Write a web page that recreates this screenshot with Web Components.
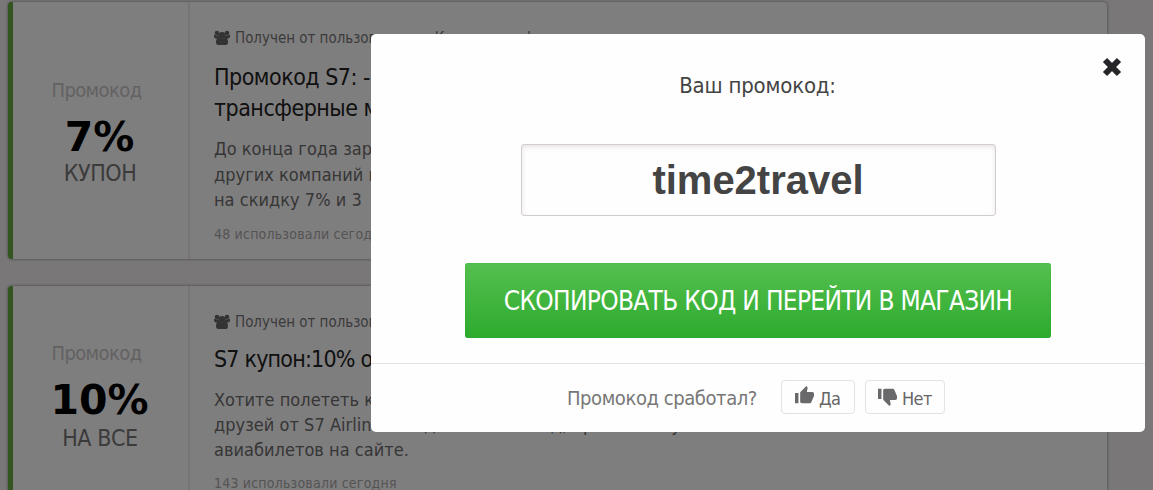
<!DOCTYPE html>
<html lang="ru">
<head>
    <meta charset="UTF-8">
    <meta name="viewport" content="width=device-width, initial-scale=1.0">
    <title>Промокоды S7</title>
    <style>
        body {
            margin: 0;
            height: 490px;
            overflow: hidden;
            background: #f3eff1;
            font-family: "DejaVu Sans Condensed", "DejaVu Sans", sans-serif;
            font-stretch: condensed;
        }
        main {
            display: flex;
            flex-direction: column;
            gap: 27px;
            box-sizing: border-box;
            height: 490px;
            padding: 2px 46px 0 8px;
            overflow: hidden;
        }
    </style>
</head>
<body>

    <main>
        <coupon-card style="--height:257px; --offer-top:76px; --meta-gap:14px">
            <span slot="kind">Промокод</span>
            <span slot="amount">7%</span>
            <span slot="scope">КУПОН</span>
            <span slot="author">Получен от пользователя &nbsp; &nbsp;Константин ф.</span>
            <span slot="title">Промокод S7: -7%<br>трансферные мили</span>
            <span slot="text">До конца года зарегис<br>других компаний при<br>на скидку 7% и 3 &nbsp;мили</span>
            <span slot="used">48 использовали сегодня</span>
        </coupon-card>
        <coupon-card style="--height:230px; --offer-top:55px; --meta-gap:12px; --scope-gap:2px; --line:25px; --title-spacing:-.8px">
            <span slot="kind">Промокод</span>
            <span slot="amount">10%</span>
            <span slot="scope">НА ВСЕ</span>
            <span slot="author">Получен от пользователя</span>
            <span slot="title">S7 купон:10% от</span>
            <span slot="text">Хотите полететь куда<br>друзей от S7 Airlines вводи на сайте код, при заказе у<br>авиабилетов на сайте.</span>
            <span slot="used">143 использовали сегодня</span>
        </coupon-card>
    </main>

    <promo-modal>
        <span slot="heading">Ваш промокод:</span>
        <promo-code slot="code">time2travel</promo-code>
        <copy-button slot="action">СКОПИРОВАТЬ КОД И ПЕРЕЙТИ В МАГАЗИН</copy-button>
        <span slot="question">Промокод сработал?</span>
        <vote-button slot="votes" kind="up">Да</vote-button>
        <vote-button slot="votes" kind="down">Нет</vote-button>
    </promo-modal>

    <template id="card-template">
        <style>
            :host {
                display: grid;
                flex: none;
                grid-template-columns: 177px 1fr;
                box-sizing: border-box;
                height: var(--height);
                border-left: 5px solid #66ad43;
                border-radius: 4px;
                background: #fffdfe;
                box-shadow: 0 0 3px rgba(0, 0, 0, .5);
                overflow: hidden;
                white-space: nowrap;
            }
            .offer {
                display: flex;
                flex-direction: column;
                align-items: center;
                padding-top: var(--offer-top);
                border-right: 2px solid #ece8ea;
            }
            .kind { margin-right: 8px; font-size: 20px; line-height: 24px; letter-spacing: -.6px; color: #c6c4c5; }
            .amount { margin: 13px 2px 0 0; font: bold 41px/44px "DejaVu Sans", sans-serif; font-stretch: normal; color: #000; }
            .scope { margin: var(--scope-gap, 0) 1px 0 0; font-size: 23px; line-height: 28px; letter-spacing: -.4px; color: #777; }
            .info { padding: 26px 0 0 24px; }
            .meta { display: flex; align-items: center; gap: 5px; font-size: 15px; line-height: 20px; color: #777; letter-spacing: -.02px; }
            .meta svg { display: block; }
            .title { margin-top: var(--meta-gap); font-size: 23px; line-height: 31px; letter-spacing: var(--title-spacing, -.5px); color: #222; }
            .text { margin-top: 12px; font-size: 18px; line-height: var(--line, 25.7px); letter-spacing: .03px; color: #6c6c6c; }
            .used { margin-top: 11px; font-size: 14px; line-height: 20px; letter-spacing: .2px; color: #a8a8a8; }
        </style>
        <div class="offer">
            <div class="kind"><slot name="kind"></slot></div>
            <div class="amount"><slot name="amount"></slot></div>
            <div class="scope"><slot name="scope"></slot></div>
        </div>
        <div class="info">
            <div class="meta">
                <svg width="16" height="16" viewBox="0 0 16 16" fill="#666">
                    <circle cx="3" cy="3" r="2.3"/><circle cx="13" cy="3" r="2.3"/>
                    <path d="M0 5Q0 4.500.6 4.800Q3 6 4.600 5L5.400 8.500H2Q0 8.500 0 6.500ZM16 5Q16 4.500 15.400 4.800Q13 6 11.400 5L10.600 8.500H14Q16 8.500 16 6.500Z"/>
                    <circle cx="8" cy="5.400" r="3.400"/>
                    <path d="M4.600 7.300Q6 8.500 8 8.500T11.400 7.300Q14 8 14 12.500Q14 15 11.800 15H4.200Q2 15 2 12.500Q2 8 4.600 7.300Z"/>
                </svg>
                <slot name="author"></slot>
            </div>
            <div class="title"><slot name="title"></slot></div>
            <div class="text"><slot name="text"></slot></div>
            <div class="used"><slot name="used"></slot></div>
        </div>
    </template>

    <template id="modal-template">
        <style>
            /* затемнение на всю страницу */
            :host {
                position: absolute;
                inset: 0;
                display: block;
                box-sizing: border-box;
                padding: 34px 8px 0 371px;
                background: rgba(0, 0, 0, .5);
            }
            .box {
                display: flex;
                flex-direction: column;
                height: 398px;
                border-radius: 5px;
                background: #fefefe;
                overflow: hidden;
            }
            .body { flex: 0 0 329px; display: flex; flex-direction: column; align-items: center; }
            .close { align-self: flex-end; display: block; margin: 23px 23px 0 0; }
            .heading { margin: -6px 1px 0 0; font-size: 22px; line-height: 30px; letter-spacing: -.2px; color: #444; white-space: nowrap; }
            ::slotted(promo-code) { margin-top: 43px; }
            ::slotted(copy-button) { margin-top: 47px; }
            ::slotted(vote-button) { margin-bottom: 2px; }
            .footer {
                flex: 1;
                display: flex;
                align-items: center;
                justify-content: center;
                gap: 10px;
                padding-right: 4px;
                border-top: 1px solid #e3e3e5;
            }
            .question { margin-right: 14px; font-size: 20px; letter-spacing: -.42px; color: #777; white-space: nowrap; }
        </style>
        <div class="box">
            <div class="body">
                <svg class="close" width="20" height="20" viewBox="0 0 20 20" stroke="#26262a" stroke-width="6" stroke-linecap="butt">
                    <path d="M3 3L17 17M17 3L3 17"/>
                </svg>
                <div class="heading"><slot name="heading"></slot></div>
                <slot name="code"></slot>
                <slot name="action"></slot>
            </div>
            <div class="footer">
                <div class="question"><slot name="question"></slot></div>
                <slot name="votes"></slot>
            </div>
        </div>
    </template>

    <template id="code-template">
        <style>
            :host {
                display: flex;
                align-items: center;
                justify-content: center;
                box-sizing: border-box;
                width: 475px;
                height: 72px;
                border: 1px solid #d3ccd0;
                border-radius: 3px;
                background: #fefefe;
                box-shadow: inset 0 2px 4px rgba(80, 40, 60, .13);
                font: bold 40px "Liberation Sans", Arial, sans-serif;
                color: #444;
            }
        </style>
        <slot></slot>
    </template>

    <template id="copy-template">
        <style>
            :host {
                display: flex;
                align-items: center;
                justify-content: center;
                box-sizing: border-box;
                width: 586px;
                height: 75px;
                border-radius: 3px;
                background: linear-gradient(#55c04f, #2daa2d);
                box-shadow: inset 0 0 1px #259325;
                font-size: 26px;
                letter-spacing: -.68px;
                color: #fff;
                white-space: nowrap;
            }
        </style>
        <slot></slot>
    </template>

    <template id="vote-template">
        <style>
            :host {
                display: flex;
                align-items: center;
                box-sizing: border-box;
                width: 74px;
                height: 34px;
                padding-left: 13px;
                border: 1px solid #e2e2e4;
                border-radius: 4px;
                gap: 5px;
                font-size: 18px;
                letter-spacing: -.6px;
                color: #666;
                white-space: nowrap;
            }
            :host([kind="down"]) { width: 80px; padding-left: 12px; }
            svg { display: block; margin-top: -3px; }
            :host([kind="down"]) svg { transform: rotate(180deg) scaleX(-1); margin-top: -1px; }
            span { padding-top: 2px; }
        </style>
        <svg width="19" height="19" viewBox="1 1 22 22" fill="#69696b">
            <path d="M1 21h4V9H1v12zm22-11c0-1.100-.9-2-2-2h-6.310l.95-4.570.03-.32c0-.41-.17-.79-.44-1.060L14.170 1 7.590 7.590C7.220 7.950 7 8.450 7 9v10c0 1.100.9 2 2 2h9c.83 0 1.540-.5 1.840-1.220l3.020-7.050c.09-.23.14-.47.14-.73v-2z"/>
        </svg>
        <span><slot></slot></span>
    </template>

    <script>

        // у всех элементов разметка лежит в своём template
        function define(name, templateId) {
            customElements.define(name, class extends HTMLElement {
                constructor() {
                    super();
                    this.attachShadow({mode:'open'});
                    this.shadowRoot.append(document.querySelector(templateId).content.cloneNode(true));
                }
            });
        }

        define('coupon-card', '#card-template');
        define('promo-code', '#code-template');
        define('copy-button', '#copy-template');
        define('vote-button', '#vote-template');
        define('promo-modal', '#modal-template');

    </script>

</body>
</html>
